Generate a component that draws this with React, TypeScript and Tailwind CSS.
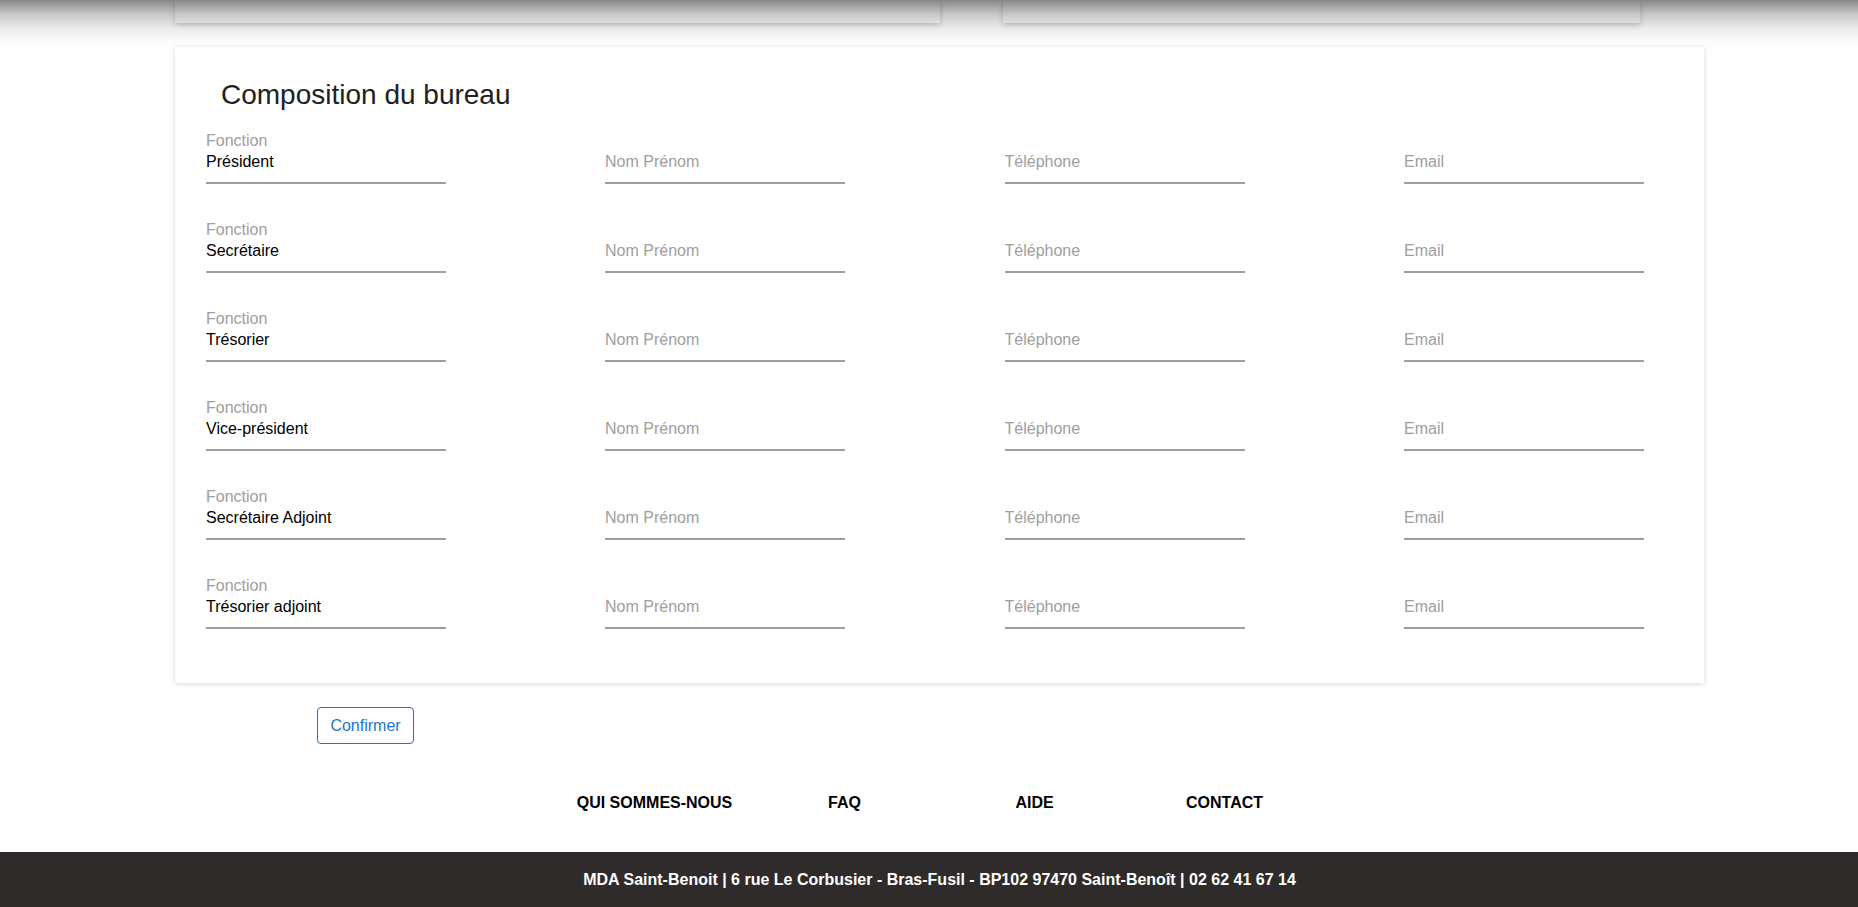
import React from "react";

const roles = [
  "Président",
  "Secrétaire",
  "Trésorier",
  "Vice-président",
  "Secrétaire Adjoint",
  "Trésorier adjoint",
];

const inputCls =
  "block w-[240px] bg-transparent border-0 border-b-2 border-[#9e9e9e] pb-[10px] text-[16px] leading-[20px] text-black outline-none placeholder:text-[#9e9e9e]";

function Field({ label, value, placeholder }: { label?: string; value?: string; placeholder?: string }) {
  return (
    <div className="flex flex-col">
      <div className="h-[20px] text-[16px] leading-[20px] text-[#9e9e9e]">{label}</div>
      <input
        className={inputCls + " mt-[1px]"}
        defaultValue={value}
        placeholder={placeholder}
      />
    </div>
  );
}

export default function App() {
  return (
    <div className="relative min-h-screen bg-white font-['Liberation_Sans',Arial,sans-serif]">
      {/* header shadow falling over the scrolled content */}
      <div className="pointer-events-none absolute left-0 right-0 top-0 z-10 h-[50px] bg-[linear-gradient(to_bottom,rgba(0,0,0,0.47)_0px,rgba(0,0,0,0.22)_14px,rgba(0,0,0,0.08)_28px,rgba(0,0,0,0.02)_40px,transparent_50px)]" />

      <div className="pl-[21px]">
        <div className="mx-auto w-[1529px]">
          <div className="flex gap-[63px]">
            <div className="h-[23px] w-[765px] bg-white shadow-[0_2px_6px_rgba(0,0,0,0.2)]" />
            <div className="h-[23px] w-[637px] bg-white shadow-[0_2px_6px_rgba(0,0,0,0.2)]" />
          </div>

          <div className="mt-[24px] bg-white px-[31px] pb-[54px] pt-[31px] shadow-[0_1px_5px_rgba(0,0,0,0.16)]">
            <h3 className="ml-[15px] text-[28px] leading-[34px] text-[#212121]">Composition du bureau</h3>
            <div className="mt-[19px] flex flex-col gap-y-[36px]">
              {roles.map((r) => (
                <div key={r} className="grid grid-cols-[399px_399.5px_399.5px_240px]">
                  <Field label="Fonction" value={r} />
                  <Field placeholder="Nom Prénom" />
                  <Field placeholder="Téléphone" />
                  <Field placeholder="Email" />
                </div>
              ))}
            </div>
          </div>

          <div className="mt-[24px] pl-[142px]">
            <button
              type="button"
              className="h-[37px] w-[97px] rounded-[4px] border border-[#1976d2] bg-white text-[16px] leading-[20px] text-[#1976d2]"
            >
              Confirmer
            </button>
          </div>
        </div>

        <nav className="mt-[49px] flex justify-center">
          {["QUI SOMMES-NOUS", "FAQ", "AIDE", "CONTACT"].map((l) => (
            <a key={l} className="w-[190px] text-center text-[16px] font-bold leading-[20px] text-black">
              {l}
            </a>
          ))}
        </nav>
      </div>

      <footer className="mt-[39px] bg-[#2f2b2a] pb-[18px] pl-[21px] pt-[18px]">
        <p className="text-center text-[16px] font-bold leading-[20px] text-white">
          MDA Saint-Benoit | 6 rue Le Corbusier - Bras-Fusil - BP102 97470 Saint-Benoît | 02 62 41 67 14
        </p>
      </footer>
    </div>
  );
}
